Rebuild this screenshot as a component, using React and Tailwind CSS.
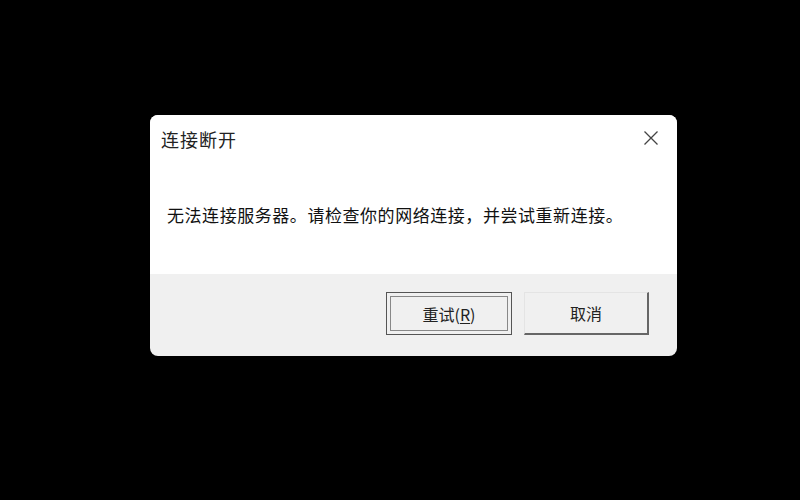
export default function App() {
  const font = { fontFamily: '"Noto Sans CJK SC", "Noto Sans", sans-serif' };
  return (
    <div className="w-[800px] h-[500px] bg-black relative" style={font}>
      <div className="absolute left-[150px] top-[115px] w-[527px] h-[241px] rounded-[8px] overflow-hidden flex flex-col bg-[#f0f0f0]">
        <div className="bg-white h-[159px] flex flex-col">
          <div className="flex items-center justify-between h-[48px] pl-[11px] pr-[18px]">
            <span className="text-[18px] text-[#222] tracking-[1px]">连接断开</span>
            <svg width="16" height="16" viewBox="0 0 16 16" className="mt-[-2px]">
              <path d="M1.5 1.5 L14.5 14.5 M14.5 1.5 L1.5 14.5" stroke="#444" strokeWidth="1.3" fill="none" />
            </svg>
          </div>
          <div className="pl-[17px] pt-[40px] text-[17px] leading-[24px] text-[#111] tracking-[0.55px]">
            无法连接服务器。请检查你的网络连接，并尝试重新连接。
          </div>
        </div>
        <div className="flex-1 flex justify-end items-start gap-[12px] pt-[18px] pr-[28px]">
          <button className="w-[126px] h-[43px] border border-[#555] bg-[#f0f0f0] p-[3px]">
            <div className="w-full h-full border border-[#888] flex items-center justify-center text-[16px] text-[#222]">
              重试(<span className="underline underline-offset-2">R</span>)
            </div>
          </button>
          <button className="w-[125px] h-[43px] bg-[#f0f0f0] border-t border-l border-t-[#e4e4e4] border-l-[#e4e4e4] border-b-2 border-r-2 border-b-[#666] border-r-[#666] flex items-center justify-center text-[16px] text-[#222]">
            取消
          </button>
        </div>
      </div>
    </div>
  );
}
